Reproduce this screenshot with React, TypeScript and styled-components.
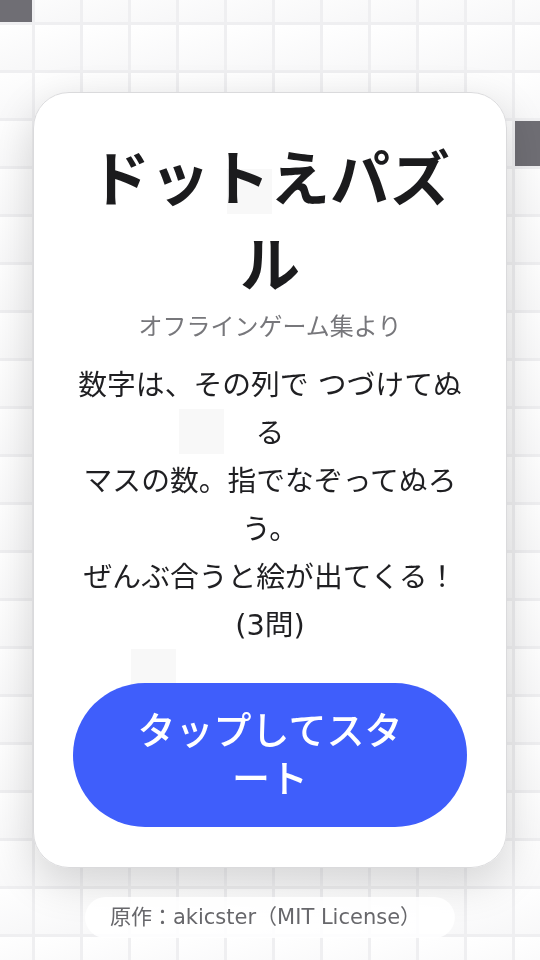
import styled, { createGlobalStyle } from "styled-components";

const COLS = 12;
const ROWS = 21;
// filled cells of the board behind the start card: [col, row]
const FILLED = [
  [0, 0],
  [5, 4],
  [11, 3],
  [4, 9],
  [3, 14],
];

const GlobalStyle = createGlobalStyle`
  html, body {
    margin: 0;
    padding: 0;
    height: 100%;
    overflow: hidden;
    background: #ffffff;
  }
  body {
    font-family: "DejaVu Sans", "Noto Sans CJK JP", sans-serif;
  }
`;

function App() {
  const isFilled = (c: number, r: number) =>
    FILLED.some(([fc, fr]) => fc === c && fr === r);

  const cells = [];
  for (let r = 0; r < ROWS; r++) {
    for (let c = 0; c < COLS; c++) {
      cells.push(<Cell key={`${r}-${c}`} $filled={isFilled(c, r)} />);
    }
  }

  return (
    <>
      <GlobalStyle />
      <Page>
        <Board>{cells}</Board>
      </Page>

      <Overlay>
        <StartCard>
          <Title>ドットえパズル</Title>
          <SubTitle>オフラインゲーム集より</SubTitle>
          <Description>
            数字は、その列で つづけてぬる
            <br />
            マスの数。指でなぞってぬろう。
            <br />
            ぜんぶ合うと絵が出てくる！
            <br />
            (3問)
          </Description>
          <StartBtn>タップしてスタート</StartBtn>
        </StartCard>
      </Overlay>

      <Credit>原作：akicster（MIT License）</Credit>
    </>
  );
}

export default App;

const Page = styled.div`
  width: 540px;
  height: 960px;
  overflow: hidden;
`;

const Board = styled.div`
  display: grid;
  grid-template-columns: repeat(${COLS}, 45px);
  grid-auto-rows: 45px;
  gap: 3px;
  width: max-content;
  margin: -23px 0 0 -13px;
  background: #efeff1;
`;

const Cell = styled.div<{ $filled: boolean }>`
  background: ${({ $filled }) =>
    $filled ? "#6f6e74" : "linear-gradient(160deg, #ffffff 0%, #f7f7f8 100%)"};
`;

const Overlay = styled.div`
  position: fixed;
  inset: 0;
  display: flex;
  justify-content: center;
  align-items: center;
`;

const StartCard = styled.div`
  box-sizing: border-box;
  width: 474px;
  padding: 44px 39px 40px;
  background: rgba(255, 255, 255, 0.95);
  border: 1px solid #dadadc;
  border-radius: 36px;
  box-shadow: 0 14px 44px rgba(0, 0, 0, 0.16);
  display: flex;
  flex-direction: column;
  align-items: center;
  text-align: center;
`;

const Title = styled.h1`
  margin: 0;
  font-size: 60px;
  line-height: 86px;
  font-weight: 700;
  color: #1b1b1d;
`;

const SubTitle = styled.div`
  font-size: 24px;
  line-height: 36px;
  color: #77777b;
`;

const Description = styled.p`
  margin: 16px 0 0;
  font-size: 28.8px;
  line-height: 48px;
  color: #1f1f22;
`;

const StartBtn = styled.button`
  box-sizing: border-box;
  width: 100%;
  margin-top: 34px;
  padding: 24px 50px;
  border: none;
  border-radius: 999px;
  background: #3f5efb;
  color: #ffffff;
  font-family: inherit;
  font-size: 38px;
  line-height: 48px;
  font-weight: 500;
  cursor: pointer;
`;

const Credit = styled.div`
  position: fixed;
  left: 50%;
  bottom: 22px;
  transform: translateX(-50%);
  white-space: nowrap;
  padding: 6px 34px 7px 25px;
  border-radius: 999px;
  background: rgba(255, 255, 255, 0.88);
  color: #67676b;
  font-size: 21px;
  line-height: 28px;
`;
